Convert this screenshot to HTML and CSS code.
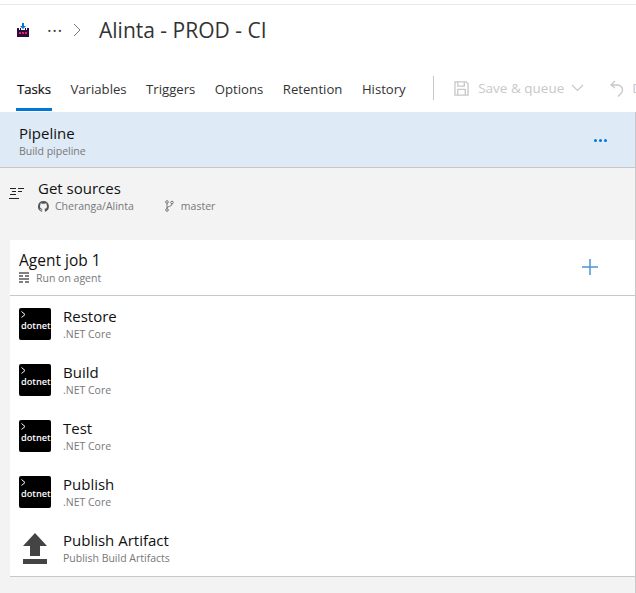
FILE: index.html
```html
<!DOCTYPE html>
<html lang="en">
<head>
    <meta charset="UTF-8">
    <title>Alinta - PROD - CI</title>
    <link rel="stylesheet" href="styles.css">
</head>
<body>
    <header class="title-bar">
        <svg class="project-icon" width="14" height="14" viewBox="0 0 14 14">
            <path d="M6 0h2v3h2L7 6 4 3h2z" fill="#0078d7"/>
            <path d="M1 5h2v2h1V5h1v2h4V5h1v2h1V5h2v9H1z" fill="#2b0a3d"/>
            <path d="M3 9h2v2H3zM6 9h2v2H6zM9 9h2v2H9z" fill="#e0245e"/>
        </svg>
        <span class="more-dots">&middot;&middot;&middot;</span>
        <svg class="crumb-arrow" width="9" height="14" viewBox="0 0 9 14">
            <path d="M1 1l6 6-6 6" fill="none" stroke="#777" stroke-width="1"/>
        </svg>
        <h1>Alinta - PROD - CI</h1>
    </header>

    <nav class="tabs">
        <a class="tab active">Tasks</a>
        <a class="tab">Variables</a>
        <a class="tab">Triggers</a>
        <a class="tab">Options</a>
        <a class="tab">Retention</a>
        <a class="tab">History</a>
        <span class="tab-divider"></span>
        <span class="action">
            <svg width="15" height="15" viewBox="0 0 16 16">
                <path d="M1 1h12l2 2v12H1z M4 1.500v4h7v-4 M4 15v-6h8v6" fill="none" stroke="#c8c8c8" stroke-width="1.400"/>
            </svg>
            <span class="action-label">Save &amp; queue</span>
            <svg class="chevron" width="13" height="8" viewBox="0 0 13 8">
                <path d="M1 1l5.500 5.500L12 1" fill="none" stroke="#c8c8c8" stroke-width="1.200"/>
            </svg>
        </span>
        <span class="action undo">
            <svg width="14" height="17" viewBox="0 0 14 17">
                <path d="M5 1L1 5l4 3M1 5h7a5 5 0 0 1 3 8.500l-3 3" fill="none" stroke="#c8c8c8" stroke-width="1.300"/>
            </svg>
            <span>D</span>
        </span>
    </nav>

    <main class="editor">
        <section class="pipeline">
            <div>
                <div class="item-name">Pipeline</div>
                <div class="item-sub">Build pipeline</div>
            </div>
            <span class="pipeline-more"><i></i><i></i><i></i></span>
        </section>

        <section class="sources">
            <svg class="sources-icon" width="15" height="13" viewBox="0 0 15 13">
                <path d="M1 1.500h6M9 1.500h6M3 4.500h4M9 4.500h4M1 7.500h6M0 11.500h10" stroke="#222" stroke-width="1" fill="none"/>
            </svg>
            <div>
                <div class="item-name">Get sources</div>
                <div class="item-sub source-meta">
                    <svg width="11" height="11" viewBox="0 0 16 16">
                        <path fill="#555" d="M8 0a8 8 0 0 0-2.500 15.600c.4.100.5-.2.500-.4v-1.400c-2.200.5-2.700-1-2.700-1-.4-.9-.9-1.200-.9-1.200-.7-.5.100-.5.100-.5.800.100 1.200.8 1.200.8.700 1.200 1.900.9 2.300.7.100-.5.300-.9.500-1.100-1.800-.2-3.600-.9-3.600-4 0-.9.300-1.600.8-2.100-.1-.2-.4-1 .1-2.100 0 0 .7-.2 2.200.8a7.600 7.600 0 0 1 4 0c1.500-1 2.200-.8 2.200-.8.400 1.100.2 1.900.1 2.100.5.600.8 1.300.8 2.100 0 3.100-1.900 3.700-3.700 3.900.3.300.6.800.6 1.500v2.200c0 .2.100.5.600.4A8 8 0 0 0 8 0z"/>
                    </svg>
                    <span class="repo">Cheranga/Alinta</span>
                    <svg class="branch" width="9" height="12" viewBox="0 0 9 12">
                        <path d="M2 3v6M2 8c0-2 5-1 5-4" fill="none" stroke="#777" stroke-width="1"/>
                        <circle cx="2" cy="2" r="1.300" fill="none" stroke="#777"/>
                        <circle cx="2" cy="10" r="1.300" fill="none" stroke="#777"/>
                        <circle cx="7" cy="2.500" r="1.300" fill="none" stroke="#777"/>
                    </svg>
                    <span>master</span>
                </div>
            </div>
        </section>

        <section class="job">
            <header class="job-head">
                <div>
                    <div class="item-name job-name">Agent job 1</div>
                    <div class="item-sub job-meta">
                        <svg width="10" height="11" viewBox="0 0 10 11">
                            <path fill="#808080" d="M0 0h10v2H0zM0 3h4v2H0zM6 3h4v2H6zM0 6h10v2H0zM0 9h4v2H0zM6 9h4v2H6z"/>
                        </svg>
                        Run on agent
                    </div>
                </div>
                <svg class="add-task" width="16" height="16" viewBox="0 0 16 16">
                    <path d="M8 0v16M0 8h16" stroke="#4f94d4" stroke-width="1.500" fill="none"/>
                </svg>
            </header>

            <div class="task">
                <div class="dotnet">
                    <svg class="prompt" width="5" height="7" viewBox="0 0 5 7"><path d="M.5.500l3.500 3-3.500 3" fill="none" stroke="#fff"/></svg>
                    <span>dotnet</span>
                </div>
                <div>
                    <div class="item-name">Restore</div>
                    <div class="item-sub">.NET Core</div>
                </div>
            </div>
            <div class="task">
                <div class="dotnet">
                    <svg class="prompt" width="5" height="7" viewBox="0 0 5 7"><path d="M.5.500l3.500 3-3.500 3" fill="none" stroke="#fff"/></svg>
                    <span>dotnet</span>
                </div>
                <div>
                    <div class="item-name">Build</div>
                    <div class="item-sub">.NET Core</div>
                </div>
            </div>
            <div class="task">
                <div class="dotnet">
                    <svg class="prompt" width="5" height="7" viewBox="0 0 5 7"><path d="M.5.500l3.500 3-3.500 3" fill="none" stroke="#fff"/></svg>
                    <span>dotnet</span>
                </div>
                <div>
                    <div class="item-name">Test</div>
                    <div class="item-sub">.NET Core</div>
                </div>
            </div>
            <div class="task">
                <div class="dotnet">
                    <svg class="prompt" width="5" height="7" viewBox="0 0 5 7"><path d="M.5.500l3.500 3-3.500 3" fill="none" stroke="#fff"/></svg>
                    <span>dotnet</span>
                </div>
                <div>
                    <div class="item-name">Publish</div>
                    <div class="item-sub">.NET Core</div>
                </div>
            </div>
            <div class="task">
                <svg class="upload-icon" width="32" height="32" viewBox="0 0 32 32">
                    <path fill="#444" d="M16 1L28 14H21V24H11V14H4zM4 27H28V32H4z"/>
                </svg>
                <div>
                    <div class="item-name">Publish Artifact</div>
                    <div class="item-sub">Publish Build Artifacts</div>
                </div>
            </div>
        </section>
    </main>
</body>
</html>
```

FILE: styles.css
```css
* {
    box-sizing: border-box;
}

html, body {
    height: 100%;
}

body {
    margin: 0;
    display: flex;
    flex-direction: column;
    background-color: #fff;
    color: #222;
    font-family: "Open Sans", "Noto Sans", sans-serif;
    overflow: hidden;
}

.title-bar {
    display: flex;
    align-items: center;
    height: 52px;
    margin-top: 4px;
    padding: 0 0 2px 16px;
    border-top: 1px solid #e8e8e8;
}

.project-icon {
    margin-right: 17px;
}

.more-dots {
    font-size: 18px;
    line-height: 1;
    letter-spacing: 0.500px;
    color: #444;
    width: 26px;
}

.crumb-arrow {
    margin-right: 17px;
}

h1 {
    margin: 0;
    font-size: 21px;
    font-weight: 400;
    color: #333;
}

.tabs {
    display: flex;
    align-items: stretch;
    height: 56px;
    padding-left: 16px;
    white-space: nowrap;
    overflow: hidden;
}

.tab {
    display: flex;
    align-items: center;
    flex: none;
    height: 55px;
    padding: 13px 1px 0;
    margin-right: 17.500px;
    font-size: 13.150px;
    color: #333;
    border-bottom: 3px solid transparent;
}

.tab.active {
    color: #111;
    -webkit-text-stroke: 0.200px #111;
    border-bottom-color: #0078d7;
}

.tab-divider {
    flex: none;
    width: 1px;
    height: 24px;
    margin: 20px 20px 0 9px;
    background-color: #c8c8c8;
}

.action {
    display: flex;
    align-items: center;
    flex: none;
    padding-top: 8px;
    font-size: 13.500px;
    color: #c8c8c8;
}

.action-label {
    margin: 0 7px 0 9px;
}

.undo {
    margin-left: 26px;
    gap: 8px;
}

.editor {
    flex: 1;
    display: flex;
    flex-direction: column;
    background-color: #f3f3f3;
    border-right: 1px solid #c8c8c8;
}

.item-name {
    font-size: 15px;
    line-height: 20px;
    color: #111;
}

.job-name {
    font-size: 15.500px;
}

.item-sub {
    font-size: 10.500px;
    line-height: 16px;
    color: #777;
}

.pipeline {
    display: flex;
    align-items: center;
    justify-content: space-between;
    height: 56px;
    padding: 2px 28px 0 19px;
    background-color: #deeaf6;
    border-bottom: 1px solid #c8c8c8;
}

.pipeline-more {
    display: flex;
    gap: 2px;
}

.pipeline-more i {
    width: 3px;
    height: 3px;
    border-radius: 50%;
    background-color: #0078d7;
}

.sources {
    display: flex;
    align-items: flex-start;
    height: 72px;
    padding: 10px 0 0 9px;
}

.sources-icon {
    margin: 9px 14px 0 0;
}

.source-meta {
    display: flex;
    align-items: center;
}

.repo {
    margin: 0 31px 0 6px;
}

.branch {
    margin-right: 7px;
}

.job {
    margin-left: 10px;
    background-color: #fff;
    border-bottom: 1px solid #c8c8c8;
}

.job-head {
    display: flex;
    align-items: center;
    justify-content: space-between;
    height: 56px;
    padding: 0 37px 0 9px;
    border-bottom: 1px solid #c8c8c8;
}

.job-meta {
    display: flex;
    align-items: center;
    gap: 7px;
}

.add-task {
    margin-top: -2px;
}

.task {
    display: flex;
    align-items: center;
    gap: 12px;
    height: 56px;
    padding-left: 9px;
}

.dotnet {
    display: flex;
    flex-direction: column;
    width: 32px;
    height: 32px;
    padding: 3px 0 0 2px;
    border-radius: 2px;
    background-color: #000;
    color: #fff;
    font-size: 9.200px;
    font-weight: 600;
    line-height: 10px;
    white-space: nowrap;
}

.prompt {
    flex: none;
    margin-bottom: 3px;
}

.upload-icon {
    flex: none;
}
```
